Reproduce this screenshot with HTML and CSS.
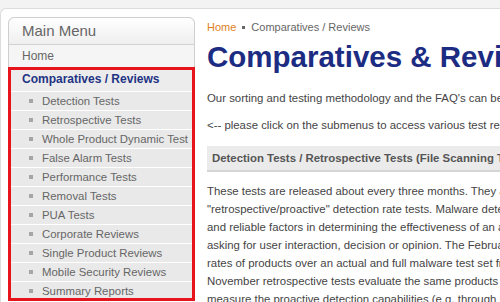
FILE: index.html
```html
<!DOCTYPE html>
<html lang="en">
<head>
    <meta charset="UTF-8">
    <meta name="viewport" content="width=device-width, initial-scale=1.0">
    <title>Comparatives &amp; Reviews</title>
    <link rel="stylesheet" href="styles.css">
</head>
<body>
<div class="top-strip"></div>
<div class="page">
    <div class="sidebar">
        <div class="main-menu">
            <div class="menu-title">Main Menu</div>
            <ul class="menu">
                <li class="menu-item"><a href="#">Home</a></li>
                <li class="menu-item active">
                    <a href="#" class="current">Comparatives / Reviews</a>
                    <ul class="submenu">
                        <li><a href="#">Detection Tests</a></li>
                        <li><a href="#">Retrospective Tests</a></li>
                        <li><a href="#">Whole Product Dynamic Test</a></li>
                        <li><a href="#">False Alarm Tests</a></li>
                        <li><a href="#">Performance Tests</a></li>
                        <li><a href="#">Removal Tests</a></li>
                        <li><a href="#">PUA Tests</a></li>
                        <li><a href="#">Corporate Reviews</a></li>
                        <li><a href="#">Single Product Reviews</a></li>
                        <li><a href="#">Mobile Security Reviews</a></li>
                        <li><a href="#">Summary Reports</a></li>
                    </ul>
                </li>
            </ul>
        </div>
    </div>
    <div class="content">
        <div class="breadcrumb">
            <a href="#">Home</a>
            <span class="sep"></span>
            <span>Comparatives / Reviews</span>
        </div>
        <h1>Comparatives &amp; Reviews</h1>
        <p>Our sorting and testing methodology and the FAQ's can be found in the Help section.</p>
        <p>&lt;-- please click on the submenus to access various test reports.</p>
        <h3 class="section-head">Detection Tests / Retrospective Tests (File Scanning Tests)</h3>
        <p class="text">These tests are released about every three months. They are divided into two parts: the<br>
        "retrospective/proactive" detection rate tests. Malware detection rates are still one of the most important<br>
        and reliable factors in determining the effectiveness of an anti-virus product, as they do not depend on<br>
        asking for user interaction, decision or opinion. The February and August tests measure the detection<br>
        rates of products over an actual and full malware test set from the last months. The May and<br>
        November retrospective tests evaluate the same products a few months later, in order to<br>
        measure the proactive detection capabilities (e.g. through heuristics and generic signatures).</p>
    </div>
</div>
</body>
</html>
```

FILE: styles.css
```css
html, body {
    margin: 0;
    overflow: hidden;
}

body {
    font-family: "Liberation Sans", Arial, sans-serif;
    font-size: 11.4px;
    color: #444;
    background-color: #f3f3f3;
}

a {
    text-decoration: none;
}

.top-strip {
    height: 8px;
}

.page {
    display: flex;
    background-color: #fff;
    border-top: 1px solid #dcdcdc;
    border-left: 1px solid #dcdcdc;
    border-radius: 6px 0 0 0;
    padding: 8px 0 0 7px;
    min-height: 400px;
}

.sidebar {
    width: 187px;
    flex-shrink: 0;
}

.main-menu {
    border: 1px solid #cfcfcf;
    border-radius: 6px 6px 0 0;
    background-color: #ececec;
    white-space: nowrap;
}

.menu-title {
    height: 26px;
    line-height: 26px;
    padding-left: 13px;
    font-size: 15px;
    color: #666;
    border-radius: 6px 6px 0 0;
    background: linear-gradient(#fff, #efefef);
    border-bottom: 1px solid #d2d2d2;
}

.menu,
.submenu {
    list-style: none;
    margin: 0;
    padding: 0;
}

.menu-item > a {
    display: block;
    height: 23px;
    line-height: 23px;
    padding-left: 13px;
    font-size: 12px;
    color: #666;
    background-color: #f5f5f5;
}

.menu-item.active {
    outline: 3px solid #e8141c;
    outline-offset: -2px;
}

.menu-item > a.current {
    font-weight: bold;
    color: #233384;
    background-color: #ececec;
    border-bottom: 1px solid #fff;
}

.submenu li {
    border-bottom: 1px solid #fff;
}

.submenu li:last-child {
    border-bottom: none;
}

.submenu a {
    display: flex;
    align-items: center;
    height: 18px;
    padding-left: 20px;
    color: #666;
    background-color: #e9e9e9;
}

.submenu a::before {
    content: "";
    width: 4px;
    height: 4px;
    margin-right: 9px;
    background-color: #a5a5a5;
}

.content {
    padding-left: 12px;
    white-space: nowrap;
}

.breadcrumb {
    font-size: 11px;
    color: #666;
    margin-top: 4px;
    display: flex;
    align-items: center;
}

.breadcrumb a {
    color: #e0801c;
}

.breadcrumb .sep {
    width: 3px;
    height: 3px;
    background-color: #666;
    margin: 0 6px;
}

h1 {
    font-size: 29.5px;
    color: #1c2c82;
    margin: 6px 0 17px;
    line-height: 36px;
}

p {
    margin: 0 0 15px;
}

.section-head {
    font-size: 11.4px;
    color: #555;
    background-color: #ebebeb;
    border-bottom: 2px solid #d5d5d5;
    margin: 0 0 10px;
    padding: 6px 5px;
    width: 480px;
}

.text {
    line-height: 18px;
}
```
